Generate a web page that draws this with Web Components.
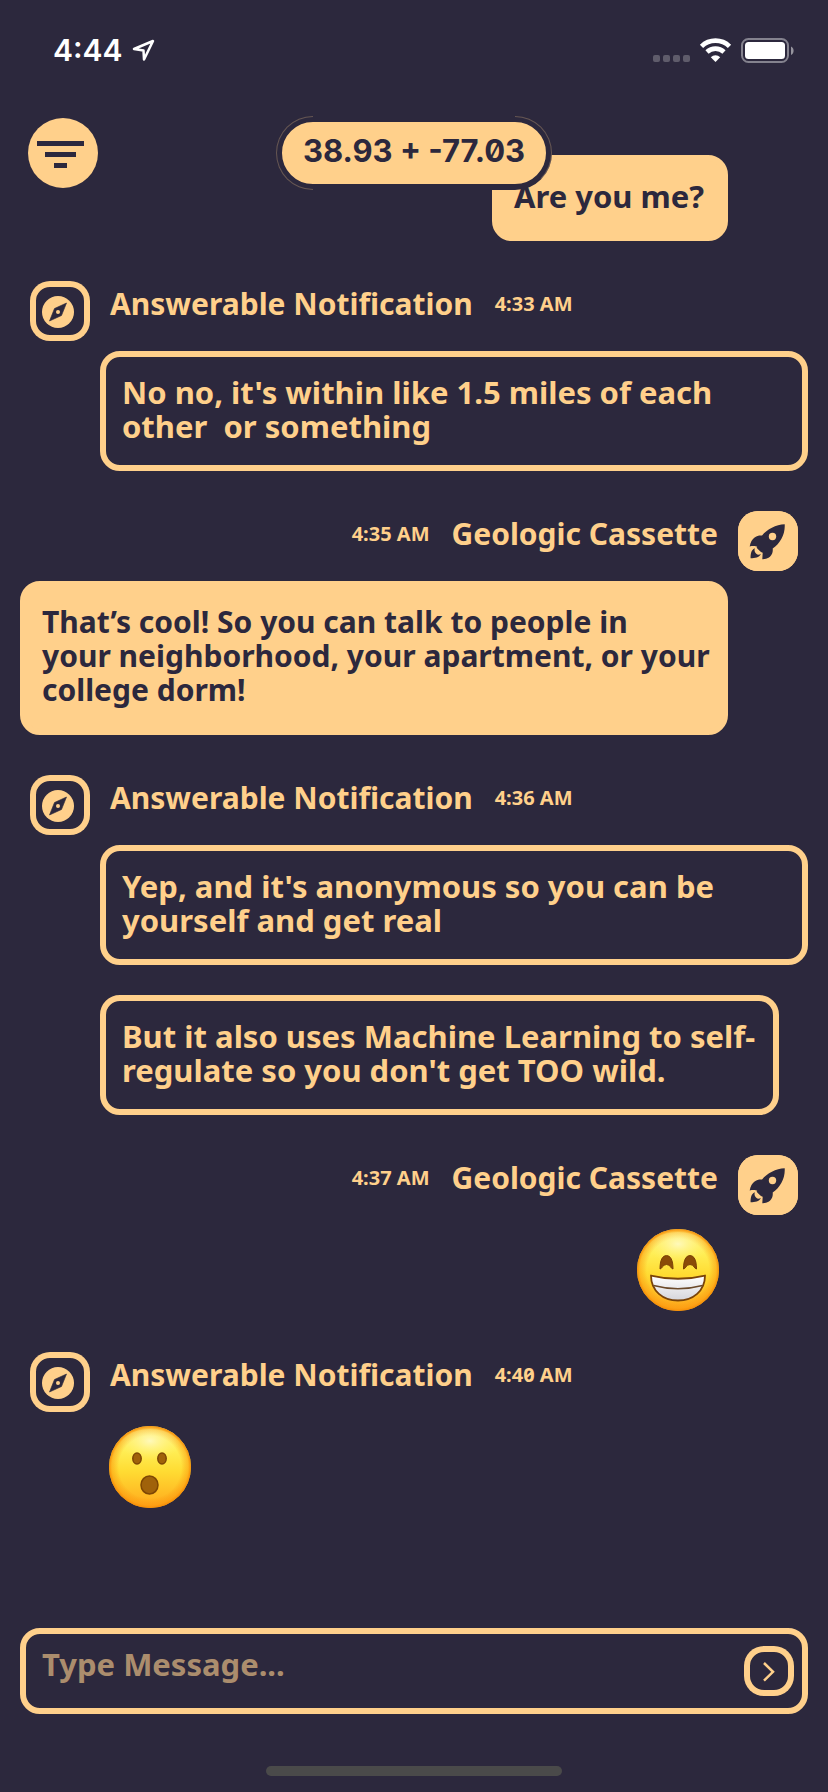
<!DOCTYPE html>
<html lang="en">
<head>
<meta charset="utf-8">
<meta name="viewport" content="width=device-width, initial-scale=1">
<title>Nearby chat</title>
<style>
  :root {
    --night: #2c283d;
    --sand: #ffd08b;
    --sand-dim: #ab8d6d;
    --edge: 6px;
    --radius: 20px;
  }
  body {
    margin: 0;
    background: var(--night);
    color: var(--sand);
    font: 700 30px/34px "Noto Sans", "Open Sans", sans-serif;
    font-variant-numeric: slashed-zero;
  }
</style>
</head>
<body>
<chat-screen>
  <status-bar slot="status">4:44</status-bar>
  <chat-toolbar slot="toolbar">38.93 + -77.03</chat-toolbar>

  <chat-group side="mine">
    <chat-bubble filled>Are you me?</chat-bubble>
  </chat-group>

  <chat-group>
    <chat-author slot="author" icon="compass" time="4:33 AM">Answerable Notification</chat-author>
    <chat-bubble size="full">No no, it's within like 1.5 miles of each<br>other&nbsp; or something</chat-bubble>
  </chat-group>

  <chat-group side="mine">
    <chat-author slot="author" side="mine" icon="rocket" time="4:35 AM">Geologic Cassette</chat-author>
    <chat-bubble filled compact size="full">That’s cool! So you can talk to people in<br>your neighborhood, your apartment, or your<br>college dorm!</chat-bubble>
  </chat-group>

  <chat-group>
    <chat-author slot="author" icon="compass" time="4:36 AM">Answerable Notification</chat-author>
    <chat-bubble size="full">Yep, and it's anonymous so you can be<br>yourself and get real</chat-bubble>
    <chat-bubble>But it also uses Machine Learning to self-<br>regulate so you don't get TOO wild.</chat-bubble>
  </chat-group>

  <chat-group side="mine">
    <chat-author slot="author" side="mine" icon="rocket" time="4:37 AM">Geologic Cassette</chat-author>
    <chat-emoji kind="grin"></chat-emoji>
  </chat-group>

  <chat-group>
    <chat-author slot="author" icon="compass" time="4:40 AM">Answerable Notification</chat-author>
    <chat-emoji kind="gasp"></chat-emoji>
  </chat-group>

  <message-composer slot="composer"></message-composer>
</chat-screen>

<script>
const define = (name, render, setup) => customElements.define(name, class extends HTMLElement {
  connectedCallback() {
    if (this.shadowRoot) return;
    const root = this.attachShadow({ mode: 'open' });
    root.innerHTML = render(this);
    if (setup) setup(root);
  }
});

define('chat-screen', () => `
  <style>
    :host { display: flex; flex-direction: column; min-height: 100vh; position: relative; box-sizing: border-box; }
    header { position: absolute; inset: 0 0 auto; z-index: 1; }
    main { flex: 1; display: flex; flex-direction: column; gap: 40px; padding: 155px 20px 40px; }
    .home { width: 296px; height: 10px; border-radius: 5px; background: #4a4a4a; margin: 52px auto 16px; }
  </style>
  <header><slot name="status"></slot><slot name="toolbar"></slot></header>
  <main><slot></slot></main>
  <slot name="composer"></slot>
  <div class="home"></div>`);

define('status-bar', () => `
  <style>
    :host { display: flex; align-items: center; gap: 8px; height: 100px; padding: 0 34px 0 53px; box-sizing: border-box;
      color: #fff; font: 600 30px/34px Inter, sans-serif; }
    .signal { margin-left: auto; }
  </style>
  <span><slot></slot></span>
  <svg width="24" height="24" viewBox="0 0 24 24" aria-label="Location in use"><path d="M22 3 3 11l9.500 1.500L13 21.500Z" fill="none" stroke="#fff" stroke-width="2.500" stroke-linejoin="round"/></svg>
  <svg class="signal" width="141" height="25" viewBox="0 0 141 25" aria-label="Wi-Fi on, battery full">
    <g fill="#fff" opacity=".24"><rect y="17" width="7" height="7" rx="2"/><rect x="10" y="17" width="7" height="7" rx="2"/><rect x="20" y="17" width="7" height="7" rx="2"/><rect x="30" y="17" width="7" height="7" rx="2"/></g>
    <g fill="none" stroke="#fff" stroke-width="4.600"><path d="M48.500 8.300a20 20 0 0 1 28 0"/><path d="M54 14a12.300 12.300 0 0 1 17 0"/></g>
    <path d="M62.500 24l-4.700-4.800a6.800 6.800 0 0 1 9.400 0Z" fill="#fff"/>
    <rect x="89" y="1" width="46" height="23" rx="6.500" fill="none" stroke="#fff" stroke-opacity=".42" stroke-width="2"/>
    <rect x="92" y="4" width="40" height="17" rx="3.500" fill="#fff"/>
    <path d="M138 8.500c3.500 1.500 3.500 7 0 8.500Z" fill="#fff" fill-opacity=".5"/>
  </svg>`);

define('chat-toolbar', () => `
  <style>
    :host { display: grid; grid-template-columns: 1fr auto 1fr; align-items: center; padding: 16px 28px 0; }
    button { font: inherit; font-variant-numeric: inherit; color: var(--night); background: var(--sand); border: 0; cursor: pointer; }
    .filter { width: 70px; height: 70px; padding: 0; border-radius: 50%; justify-self: start; }
    .filter svg { display: block; }
    .place { position: relative; border: var(--edge) solid var(--night); border-radius: 37px; padding: 12px 20px 16px; min-width: 276px;
      white-space: nowrap; font-family: Inter, sans-serif; font-size: 31px; }
    /* hairline glow round the two caps of the pill */
    .place::before, .place::after { content: ""; position: absolute; top: -6px; bottom: -6px; width: 37px; box-sizing: border-box;
      border: 1px solid rgb(255 208 139 / .28); }
    .place::before { left: -6px; border-right: 0; border-radius: 37px 0 0 37px; }
    .place::after { right: -6px; border-left: 0; border-bottom-color: transparent; border-radius: 0 37px 37px 0; }
  </style>
  <button class="filter" type="button" aria-label="Filter"><svg width="70" height="70" viewBox="0 0 70 70" fill="#2c283d"><path d="M9 23h47v5H9zM17 34h31v5H17zM26 45h13v5H26z"/></svg></button>
  <button class="place" type="button"><slot></slot></button>`);

define('chat-group', () => `
  <style>
    :host { display: flex; flex-direction: column; gap: 10px; }
    .stack { display: flex; flex-direction: column; align-items: flex-start; gap: 30px; margin-left: 80px; }
    :host([side="mine"]) .stack { align-items: flex-end; margin: 0 80px 0 0; }
  </style>
  <slot name="author"></slot>
  <div class="stack"><slot></slot></div>`);

const icons = {
  compass: `<circle cx="28" cy="31" r="16" fill="#ffd08b"/><path d="M36.500 22 31.500 34.500 19.500 40 24.500 27.500Z" fill="#2c283d" stroke="#2c283d" stroke-width=".6" stroke-linejoin="round"/><circle cx="28" cy="31" r="2" fill="#ffd08b"/>`,
  rocket: `<path d="M46.700 13.300C38 13.600 29 18.500 24 24.600 19.500 24.200 13.500 26 11.700 35.400 15 34.800 18 35 19.400 36 L18.500 36.500C20 38.500 22.500 41 24.700 41.800 L24.300 48.300C31 48.500 35.500 44 34.700 37.600 42.500 32 47.300 23 46.700 13.300Z" fill="#2c283d"/><circle cx="34.500" cy="25.500" r="3.700" fill="#ffd08b"/><path d="M16.800 37.200C13 39 12.600 43 12.600 47.300 17 47 21 46.800 22.900 43 21 44 19.500 44 18 42.400 16.500 41 16.200 39 16.800 37.200Z" fill="#2c283d"/>`
};

define('chat-author', el => `
  <style>
    :host { display: flex; align-items: flex-start; gap: 20px; height: 60px; padding: 0 10px; }
    :host([side="mine"]), :host([side="mine"]) .label { flex-direction: row-reverse; }
    .label { display: flex; align-items: center; gap: 22px; padding-top: 6px; white-space: nowrap; }
    time { font-size: 20px; }
    .avatar { flex: none; width: 60px; height: 60px; border-radius: var(--radius); box-shadow: inset 0 0 0 var(--edge) var(--sand); }
    :host([side="mine"]) .avatar { background: var(--sand); }
    svg { display: block; }
  </style>
  <div class="avatar"><svg width="60" height="60" viewBox="0 0 60 60" aria-hidden="true">${icons[el.getAttribute('icon')]}</svg></div>
  <div class="label"><span><slot></slot></span><time>${el.getAttribute('time')}</time></div>`);

define('chat-bubble', () => `
  <style>
    :host { display: block; box-sizing: border-box; max-width: 100%; border: var(--edge) solid var(--sand); border-radius: var(--radius);
      padding: 18px 18px 22px 16px; font-size: 31px; }
    :host([filled]) { background: var(--sand); color: var(--night); }
    :host([size="full"]) { width: 100%; }
    :host([compact]) { font-size: 30px; padding-right: 0; }
  </style>
  <slot></slot>`);

const faces = {
  grin: `
    <g fill="#8a4b08" stroke="#7a3f06" stroke-width="1"><path d="M32 44C32 35 34.500 30.600 38.500 30.600S45 35 45 44C43 44 42.500 39.500 38.500 39.500S34 44 32 44Z"/><path d="M55.500 44C55.500 35 58 30.600 62 30.600S68.500 35 68.500 44C66.500 44 66 39.500 62 39.500S57.500 44 55.500 44Z"/></g>
    <path d="M23 50.500Q50 57 77 50.500C77 66 65 75.500 50 75.500S23 66 23 50.500Z" fill="url(#teeth)" stroke="#7a4309" stroke-width="1.800" stroke-linejoin="round"/>
    <path d="M25.500 60.500Q50 67 74.500 60.500" fill="none" stroke="#6b4a2a" stroke-width="1.500"/>`,
  gasp: `
    <g fill="#a0620a" stroke="#7d4604" stroke-width="1.500"><ellipse cx="37" cy="36.500" rx="4.200" ry="5.500"/><ellipse cx="62" cy="36.500" rx="4.200" ry="5.500"/><ellipse cx="49.500" cy="63" rx="8.500" ry="9"/></g>`
};

define('chat-emoji', el => {
  const kind = el.getAttribute('kind');
  return `
  <style>:host { display: block; height: 87px; } svg { display: block; }</style>
  <svg width="100" height="87" viewBox="0 0 100 87" role="img" aria-label="${kind === 'grin' ? 'Grinning face' : 'Surprised face'}">
    <defs>
      <linearGradient id="skin" x2="0" y2="1"><stop offset="0" stop-color="#fff27a"/><stop offset=".3" stop-color="#ffee55"/><stop offset=".55" stop-color="#ffdc33"/><stop offset="1" stop-color="#ffa81c"/></linearGradient>
      <radialGradient id="rim"><stop offset=".76" stop-color="#f98a08" stop-opacity="0"/><stop offset=".93" stop-color="#fb950c" stop-opacity=".5"/><stop offset="1" stop-color="#f58c06"/></radialGradient>
      <radialGradient id="shine" cx=".5" cy=".3" r=".5"><stop offset="0" stop-color="#fffde0" stop-opacity=".7"/><stop offset="1" stop-color="#fff27a" stop-opacity="0"/></radialGradient>
      <linearGradient id="teeth" x2="0" y2="1"><stop offset="0" stop-color="#fff"/><stop offset="1" stop-color="#d5d5da"/></linearGradient>
    </defs>
    <circle cx="50" cy="45" r="41" fill="url(#skin)"/>
    <circle cx="50" cy="45" r="41" fill="url(#rim)"/>
    <ellipse cx="50" cy="27" rx="31" ry="20" fill="url(#shine)"/>
    ${faces[kind]}
  </svg>`;
});

define('message-composer', () => `
  <style>
    :host { display: block; padding: 0 20px; }
    form { display: flex; align-items: center; margin: 0; padding-right: 8px; border: var(--edge) solid var(--sand); border-radius: var(--radius); }
    input { flex: 1; min-width: 0; height: 74px; box-sizing: border-box; padding: 13px 16px 27px; border: 0; outline: 0; background: none;
      color: var(--sand); font: inherit; font-size: 31px; }
    input::placeholder { color: var(--sand-dim); opacity: 1; }
    button { flex: none; width: 50px; height: 50px; padding: 0; border: 0; border-radius: var(--radius); background: none;
      box-shadow: inset 0 0 0 var(--edge) var(--sand); cursor: pointer; }
    svg { display: block; }
  </style>
  <form>
    <input type="text" placeholder="Type Message..." aria-label="Message">
    <button type="submit" aria-label="Send"><svg width="50" height="50" viewBox="0 0 50 50"><path d="M20 17l9 8.800L20 34.600" fill="none" stroke="#ffd08b" stroke-width="2.500"/></svg></button>
  </form>`, root => root.querySelector('form').addEventListener('submit', e => e.preventDefault()));
</script>
</body>
</html>
